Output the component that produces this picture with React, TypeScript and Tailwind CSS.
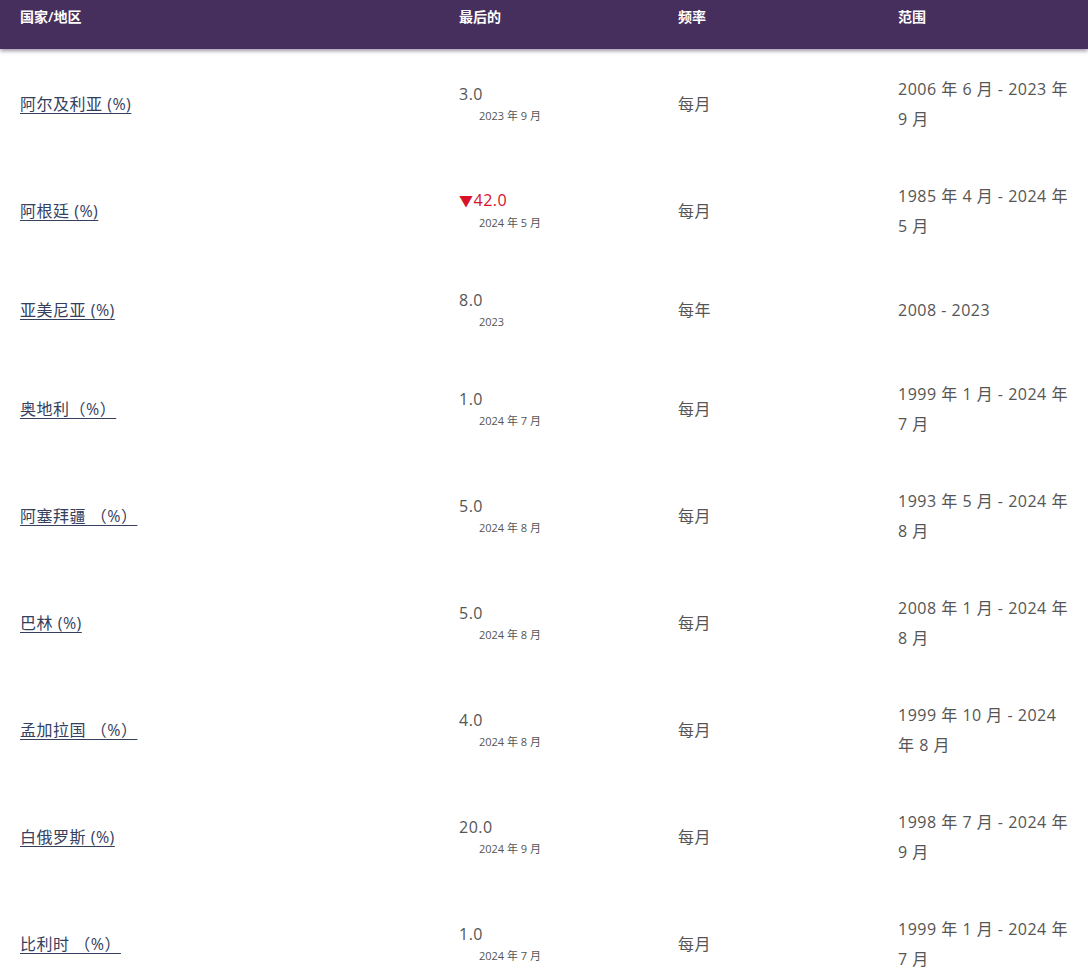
import React from 'react';

type Row = {
    name: string;
    value: string;
    down?: boolean;
    date: string;
    freq: string;
    range: string;
};

const rows: Row[] = [
    { name: '阿尔及利亚 (%)', value: '3.0', date: '2023 年 9 月', freq: '每月', range: '2006 年 6 月 - 2023 年 9 月' },
    { name: '阿根廷 (%)', value: '42.0', down: true, date: '2024 年 5 月', freq: '每月', range: '1985 年 4 月 - 2024 年 5 月' },
    { name: '亚美尼亚 (%)', value: '8.0', date: '2023', freq: '每年', range: '2008 - 2023' },
    { name: '奥地利（%）', value: '1.0', date: '2024 年 7 月', freq: '每月', range: '1999 年 1 月 - 2024 年 7 月' },
    { name: '阿塞拜疆 （%）', value: '5.0', date: '2024 年 8 月', freq: '每月', range: '1993 年 5 月 - 2024 年 8 月' },
    { name: '巴林 (%)', value: '5.0', date: '2024 年 8 月', freq: '每月', range: '2008 年 1 月 - 2024 年 8 月' },
    { name: '孟加拉国 （%）', value: '4.0', date: '2024 年 8 月', freq: '每月', range: '1999 年 10 月 - 2024 年 8 月' },
    { name: '白俄罗斯 (%)', value: '20.0', date: '2024 年 9 月', freq: '每月', range: '1998 年 7 月 - 2024 年 9 月' },
    { name: '比利时 （%）', value: '1.0', date: '2024 年 7 月', freq: '每月', range: '1999 年 1 月 - 2024 年 7 月' },
];

const cols = 'grid grid-cols-[439px_219px_220px_1fr]';

const App = () => {
    return (
        <div className="w-[1088px] min-h-[980px] bg-white font-['Open_Sans','Noto_Sans_CJK_SC',sans-serif] text-[#555]">
            <div className={`${cols} h-[49px] bg-[#462f5d] text-white text-[14px] font-semibold leading-[20px] shadow-[0_2px_4px_rgba(40,20,60,0.45)] relative`}>
                <div className="pl-5 pt-[7px]">国家/地区</div>
                <div className="pl-5 pt-[7px]">最后的</div>
                <div className="pl-5 pt-[7px]">频率</div>
                <div className="pl-5 pt-[7px]">范围</div>
            </div>
            <div className="pt-[1px] tracking-[0.5px]">
                {rows.map((row) => (
                    <div key={row.name} className={`${cols} items-center py-[23.5px]`}>
                        <div className="pl-5">
                            <a href="#" className="text-[16px] text-[#34405e] underline underline-offset-[3px] decoration-[#34405e]">
                                {row.name}
                            </a>
                        </div>
                        <div className="pl-5">
                            {row.down ? (
                                <div className="text-[16px] leading-[24px] text-[#d8102a]">
                                    <span className="text-[14px]">▼</span>
                                    {row.value}
                                </div>
                            ) : (
                                <div className="text-[16px] leading-[24px]">{row.value}</div>
                            )}
                            <div className="pl-5 text-[11px] leading-[20px] tracking-normal text-[#555]">{row.date}</div>
                        </div>
                        <div className="pl-5 text-[16px]">{row.freq}</div>
                        <div className="pl-5">
                            <div className="w-[178px] text-[16px] leading-[30px]">{row.range}</div>
                        </div>
                    </div>
                ))}
            </div>
        </div>
    );
};

export default App;
